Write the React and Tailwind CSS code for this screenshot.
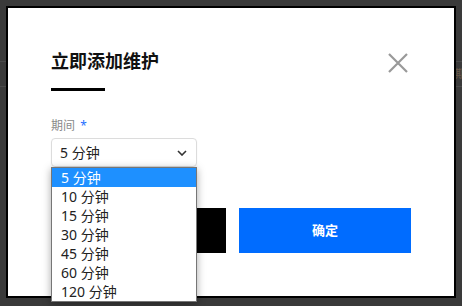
import React from 'react';

const options = ['5 分钟', '10 分钟', '15 分钟', '30 分钟', '45 分钟', '60 分钟', '120 分钟'];

const App = () => {
  return (
    <div
      className="relative w-[462px] h-[306px] overflow-hidden bg-[#3a3a3a]"
      style={{ fontFamily: '"Noto Sans", "Noto Sans CJK SC", sans-serif' }}
    >
      {/* page behind the overlay */}
      <div className="pt-[61px]">
        <div className="h-[26px] border-y border-[#4a4a4a] flex justify-end items-center pr-0 text-[11px] text-[#6b5a4a]">
          <span className="mr-[-4px]">日期</span>
        </div>
      </div>

      {/* modal */}
      <div className="absolute left-[6px] top-[6px] w-[450px] h-[292px] border-2 border-black bg-white px-[43px] pt-[40px]">
        <div className="flex justify-between items-start">
          <div>
            <h2 className="text-[18px] leading-[26px] font-bold text-[#111]">立即添加维护</h2>
            <div className="mt-[14px] w-[54px] h-[3px] bg-black" />
          </div>
          <button className="mt-[5px] mr-[3px] w-[20px] h-[20px] text-[#999]">
            <svg viewBox="0 0 20 20" width="20" height="20" fill="none" stroke="currentColor" strokeWidth="2.2">
              <path d="M1 1L19 19M19 1L1 19" />
            </svg>
          </button>
        </div>

        <div className="mt-[27px] text-[12px] leading-[16px] text-[#8a8a8a]">
          期间 <span className="ml-[2px] text-[#1e6fff]">*</span>
        </div>

        <div className="relative mt-[4px] w-[146px]">
          <div className="h-[29px] border border-[#dcdcdc] rounded-[4px] shadow-[0_1px_2px_rgba(0,0,0,0.06)] flex items-center justify-between pl-[8px] pr-[9px] text-[14px] text-[#222]">
            <span>5 分钟</span>
            <svg width="10" height="6" viewBox="0 0 10 6" fill="none" stroke="#333" strokeWidth="1.6">
              <path d="M1 1L5 5L9 1" />
            </svg>
          </div>

          <div className="absolute left-0 top-[29px] z-10 w-[146px] border border-[#767676] bg-white shadow-[0_2px_8px_rgba(0,0,0,0.35)]">
            {options.map((opt, i) => (
              <div
                key={opt}
                className={
                  i === 0
                    ? 'h-[19px] leading-[19px] pl-[9px] text-[14px] bg-[#1e90ff] text-white'
                    : 'h-[19px] leading-[19px] pl-[9px] text-[14px] text-[#222]'
                }
              >
                {opt}
              </div>
            ))}
          </div>
        </div>

        <div className="mt-[41px] flex gap-[13px]">
          <button className="w-[175px] h-[45px] bg-black text-white text-[13px] font-bold">取消</button>
          <button className="w-[172px] h-[45px] bg-[#006cff] text-white text-[13px] font-bold">确定</button>
        </div>
      </div>
    </div>
  );
};

export default App;
